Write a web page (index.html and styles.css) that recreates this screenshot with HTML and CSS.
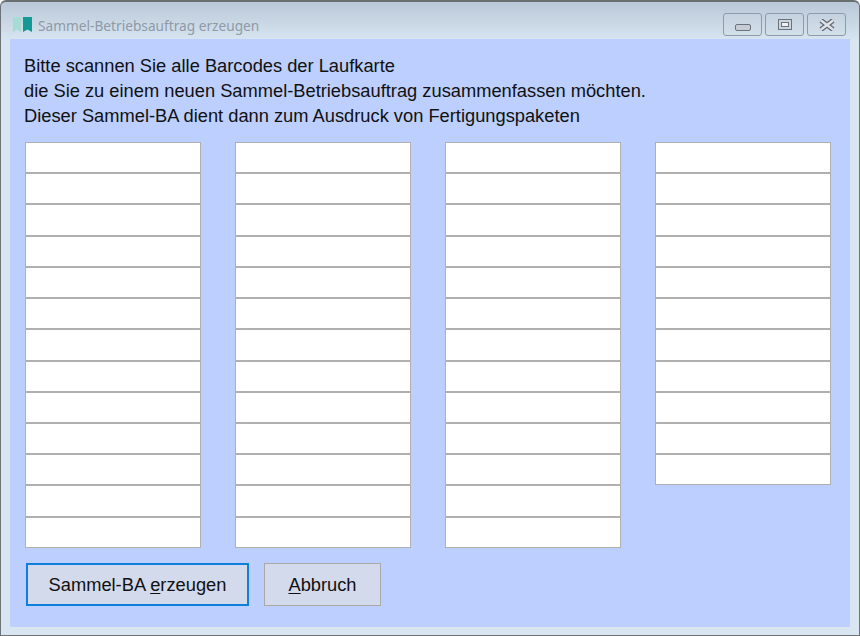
FILE: index.html
```html
<!DOCTYPE html>
<html lang="de">
<head>
<meta charset="utf-8">
<title>Sammel-Betriebsauftrag erzeugen</title>
<link rel="stylesheet" href="styles.css">
</head>
<body>
<div class="window">
  <header class="titlebar">
    <svg class="app-icon" width="20" height="16" viewBox="0 0 20 16">
      <path d="M0 0h8v15l-4-2.500L0 15z" fill="#a5dcd3"/>
      <path d="M10 0h9v15l-4.500-2.500L10 15z" fill="#139a94"/>
    </svg>
    <span class="title">Sammel-Betriebsauftrag erzeugen</span>
    <div class="controls">
      <div class="ctrl ctrl-min">
        <svg width="16" height="7" viewBox="0 0 16 7"><rect x="0.500" y="0.500" width="15" height="6" rx="1.500" fill="#c8ccd4" stroke="#6a727e"/></svg>
      </div>
      <div class="ctrl">
        <svg width="14" height="11" viewBox="0 0 14 11"><rect x="0.500" y="0.500" width="13" height="10" fill="#ccd4dc" stroke="#6a727e"/><rect x="3.500" y="3.500" width="7" height="4" fill="#eef2f6" stroke="#6a727e"/></svg>
      </div>
      <div class="ctrl">
        <svg width="16" height="12" viewBox="0 0 16 12"><path d="M2 1.500l12 9M14 1.500l-12 9" stroke="#5f6873" stroke-width="5" fill="none"/><path d="M2 1.500l12 9M14 1.500l-12 9" stroke="#dfe3e8" stroke-width="2.500" fill="none"/></svg>
      </div>
    </div>
  </header>
  <main class="client">
    <p class="intro">Bitte scannen Sie alle Barcodes der Laufkarte<br>die Sie zu einem neuen Sammel-Betriebsauftrag zusammenfassen möchten.<br>Dieser Sammel-BA dient dann zum Ausdruck von Fertigungspaketen</p>
    <div class="columns">
      <div class="col"><input class="field"><input class="field"><input class="field"><input class="field"><input class="field"><input class="field"><input class="field"><input class="field"><input class="field"><input class="field"><input class="field"><input class="field"><input class="field"></div>
      <div class="col"><input class="field"><input class="field"><input class="field"><input class="field"><input class="field"><input class="field"><input class="field"><input class="field"><input class="field"><input class="field"><input class="field"><input class="field"><input class="field"></div>
      <div class="col"><input class="field"><input class="field"><input class="field"><input class="field"><input class="field"><input class="field"><input class="field"><input class="field"><input class="field"><input class="field"><input class="field"><input class="field"><input class="field"></div>
      <div class="col"><input class="field"><input class="field"><input class="field"><input class="field"><input class="field"><input class="field"><input class="field"><input class="field"><input class="field"><input class="field"><input class="field"></div>
    </div>
    <div class="actions">
      <button class="btn btn-primary">Sammel-BA <u>e</u>rzeugen</button>
      <button class="btn btn-secondary"><u>A</u>bbruch</button>
    </div>
  </main>
</div>
</body>
</html>
```
FILE: styles.css
```css
* { box-sizing: border-box; }
html, body { margin: 0; height: 100%; }
body { background: #ffffff; overflow: hidden; }
.window {
  width: 860px;
  height: 636px;
  padding: 0 9px 8px 10px;
  border: 1px solid #6f7378;
  border-top: 2px solid #6b6f72;
  border-radius: 6px 6px 0 0;
  background: linear-gradient(180deg, #b9c8d8 0, #d9e6f2 40px, #d9e6f2 100%);
  display: flex;
  flex-direction: column;
}
.titlebar {
  height: 37px;
  margin-left: -1px;
  flex: none;
  display: flex;
  align-items: center;
  padding-top: 9px;
}
.app-icon { margin-left: 3px; flex: none; }
.title {
  margin-left: 5px;
  font: 13.700px "Noto Sans", sans-serif;
  color: #8e9aa6;
}
.controls { margin-left: auto; display: flex; gap: 3px; align-self: flex-start; margin-top: 2px; margin-right: 4px; }
.ctrl {
  width: 39px;
  height: 23px;
  border: 1px solid #8d9baa;
  border-radius: 3px;
  background: linear-gradient(180deg, #c4d1de, #d3e0ec);
  display: flex;
  align-items: center;
  justify-content: center;
}
.ctrl-min { align-items: flex-end; padding-bottom: 4px; }
.client {
  flex: 1;
  background: #bccffe;
  margin-left: -1px;
  padding: 14px 0 0 15px;
  display: flex;
  flex-direction: column;
}
.intro {
  margin: 0 0 0 -1px;
  font: 18.300px/25px "Liberation Sans", Arial, sans-serif;
  color: #111;
}
.columns { display: flex; gap: 34px; margin-top: 14px; align-items: flex-start; }
.col { width: 176px; display: flex; flex-direction: column; }
.field {
  display: block;
  width: 176px;
  height: 31.230px;
  margin: 0;
  padding: 0;
  background: #fff;
  border: 1px solid #b0b0b0;
  border-radius: 0;
  outline: none;
}
.actions { display: flex; gap: 15px; margin-top: 15px; margin-left: 1px; }
.btn {
  height: 43px;
  padding: 2px 0 0;
  background: #d3daec;
  font: 18.300px "Liberation Sans", Arial, sans-serif;
  color: #111;
  border-radius: 0;
}
.btn u { text-underline-offset: 2px; }
.btn-primary { width: 223px; border: 2px solid #0f7fdc; }
.btn-secondary { width: 117px; border: 1px solid #a9a9a9; }
```
